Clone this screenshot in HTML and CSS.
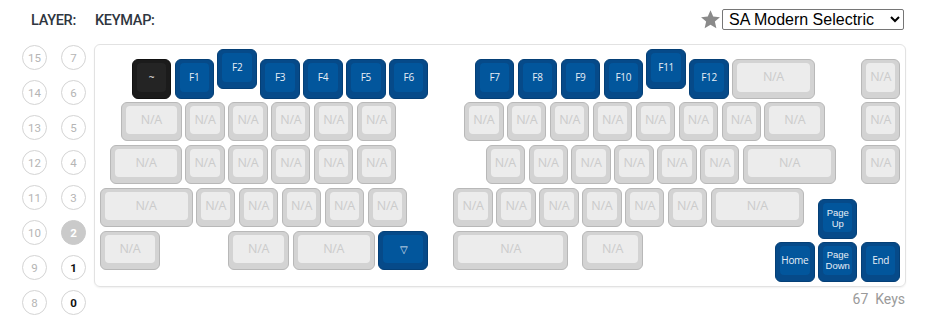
FILE: index.html
```html
<!DOCTYPE html>
<html lang="en">
<head>
    <meta charset="UTF-8">
    <meta name="viewport" content="width=device-width, initial-scale=1.0">
    <title>Keymap</title>
    <link rel="stylesheet" href="styles.css">
</head>
<body>
    <!-- Barra superior -->
    <div class="cabecera">
        <span class="titulo titulo-layer">LAYER:</span>
        <span class="titulo">KEYMAP:</span>
        <div class="perfil">
            <svg class="estrella" viewBox="0 0 24 24" width="21" height="21">
                <path d="M12 1.5l3.1 7.1 7.7.7-5.8 5.1 1.7 7.6L12 18l-6.7 4 1.7-7.6-5.8-5.1 7.7-.7z" fill="#8a8a8a"/>
            </svg>
            <select class="selector">
                <option>SA Modern Selectric</option>
            </select>
        </div>
    </div>

    <div class="principal">
        <!-- Capas -->
        <div class="capas">
            <span class="capa">15</span><span class="capa">7</span>
            <span class="capa">14</span><span class="capa">6</span>
            <span class="capa">13</span><span class="capa">5</span>
            <span class="capa">12</span><span class="capa">4</span>
            <span class="capa">11</span><span class="capa">3</span>
            <span class="capa">10</span><span class="capa activa">2</span>
            <span class="capa">9</span><span class="capa usada">1</span>
            <span class="capa">8</span><span class="capa usada">0</span>
        </div>

        <div class="columna">
            <!-- Teclado -->
            <div class="teclado" id="teclado"></div>
            <div class="pie">67&nbsp; Keys</div>
        </div>
    </div>

    <script>
        // [x, y, ancho, etiqueta, color] en unidades de tecla
        const U = 42.9;
        const teclas = [
            [0.75, 0, 1, '~', 'negra'], [1.75, 0, 1, 'F1', 'azul'], [2.75, -0.23, 1, 'F2', 'azul'],
            [3.75, 0, 1, 'F3', 'azul'], [4.75, 0, 1, 'F4', 'azul'], [5.75, 0, 1, 'F5', 'azul'], [6.75, 0, 1, 'F6', 'azul'],
            [8.75, 0, 1, 'F7', 'azul'], [9.75, 0, 1, 'F8', 'azul'], [10.75, 0, 1, 'F9', 'azul'], [11.75, 0, 1, 'F10', 'azul'],
            [12.75, -0.23, 1, 'F11', 'azul'], [13.75, 0, 1, 'F12', 'azul'], [14.75, 0, 2], [17.75, 0, 1],

            [0.5, 1, 1.5], [2, 1, 1], [3, 1, 1], [4, 1, 1], [5, 1, 1], [6, 1, 1],
            [8.5, 1, 1], [9.5, 1, 1], [10.5, 1, 1], [11.5, 1, 1], [12.5, 1, 1], [13.5, 1, 1], [14.5, 1, 1],
            [15.5, 1, 1.5], [17.75, 1, 1],

            [0.25, 2, 1.75], [2, 2, 1], [3, 2, 1], [4, 2, 1], [5, 2, 1], [6, 2, 1],
            [9, 2, 1], [10, 2, 1], [11, 2, 1], [12, 2, 1], [13, 2, 1], [14, 2, 1], [15, 2, 2.25], [17.75, 2, 1],

            [0, 3, 2.25], [2.25, 3, 1], [3.25, 3, 1], [4.25, 3, 1], [5.25, 3, 1], [6.25, 3, 1],
            [8.25, 3, 1], [9.25, 3, 1], [10.25, 3, 1], [11.25, 3, 1], [12.25, 3, 1], [13.25, 3, 1],
            [14.25, 3, 2.25], [16.75, 3.27, 1, 'Page<br>Up', 'azul doble'],

            [0, 4, 1.5], [3, 4, 1.5], [4.5, 4, 2], [6.5, 4, 1.25, '&#9661;', 'azul'],
            [8.25, 4, 2.75], [11.25, 4, 1.5],
            [15.75, 4.27, 1, 'Home', 'azul'], [16.75, 4.27, 1, 'Page<br>Down', 'azul doble'], [17.75, 4.27, 1, 'End', 'azul']
        ];

        const teclado = document.getElementById('teclado');
        teclas.forEach(function (t) {
            const tecla = document.createElement('div');
            tecla.className = 'tecla ' + (t[4] || 'vacia');
            tecla.style.left = (4.5 + t[0] * U) + 'px';
            tecla.style.top = (14 + t[1] * U) + 'px';
            tecla.style.width = (t[2] * U - 3.5) + 'px';
            tecla.innerHTML = '<div class="cara">' + (t[3] || 'N/A') + '</div>';
            teclado.appendChild(tecla);
        });
    </script>
</body>
</html>
```

FILE: styles.css
```css
/* Estilo general */
body {
    margin: 0;
    width: 931px;
    font-family: "Open Sans", Arial, sans-serif;
    background-color: #fff;
    color: #333;
}

/* Cabecera */
.cabecera {
    height: 44px;
    display: flex;
    align-items: center;
    padding: 0 27px 0 31px;
}

.titulo {
    font-family: Roboto, Arial, sans-serif;
    font-weight: 500;
    font-size: 14.5px;
    color: #2f3640;
    letter-spacing: -0.3px;
    margin-top: -4px;
}

.titulo-layer {
    width: 64px;
}

.perfil {
    margin-left: auto;
    display: flex;
    align-items: center;
    gap: 1px;
    margin-top: -5px;
}

.selector {
    width: 182px;
    height: 21px;
    font-family: "Liberation Sans", Arial, sans-serif;
    font-size: 16px;
    color: #000;
    background-color: #fff;
    border: 1px solid #767676;
    border-radius: 2px;
    padding: 0 2px;
}

/* Zona principal */
.principal {
    display: flex;
    align-items: flex-start;
}

.capas {
    width: 72px;
    padding: 1px 0 0 22px;
    display: grid;
    grid-template-columns: 25px 25px;
    grid-auto-rows: 25px;
    column-gap: 14px;
    row-gap: 10px;
}

.capa {
    box-sizing: border-box;
    width: 25px;
    height: 25px;
    border: 1px solid #d4d4d4;
    border-radius: 50%;
    display: flex;
    align-items: center;
    justify-content: center;
    font-family: Roboto, Arial, sans-serif;
    font-size: 11.5px;
    color: #b5b5b5;
}

.capa.activa {
    background-color: #cacaca;
    border-color: #cacaca;
    color: #fff;
    font-weight: 700;
}

.capa.usada {
    color: #111;
    font-weight: 700;
}

.columna {
    width: 812px;
}

/* Teclado */
.teclado {
    position: relative;
    box-sizing: border-box;
    height: 243px;
    border: 1px solid #e2e2e2;
    border-radius: 6px;
    box-shadow: 0 1px 2px rgba(0, 0, 0, 0.06);
}

.tecla {
    position: absolute;
    box-sizing: border-box;
    height: 39.5px;
    padding: 3px 4px 6px;
    border: 1px solid #b8b8b8;
    border-radius: 6px;
    background-color: #d3d3d3;
}

.cara {
    height: 100%;
    border-radius: 4px;
    background-color: #ececec;
    display: flex;
    align-items: center;
    justify-content: center;
    text-align: center;
    font-size: 12.5px;
    line-height: 12px;
    color: #cbcbcb;
    letter-spacing: -0.3px;
}

.tecla.azul {
    background-color: #064a89;
    border-color: #043f76;
}

.tecla.azul .cara {
    background-color: #02569c;
    color: #e8eef6;
    font-size: 10px;
}

.tecla.doble .cara {
    font-family: "Liberation Sans", Arial, sans-serif;
    font-size: 9.5px;
    line-height: 11px;
    letter-spacing: 0;
}

.tecla.negra {
    background-color: #1b1b1b;
    border-color: #111;
}

.tecla.negra .cara {
    background-color: #242424;
    color: #eee;
    font-size: 10px;
}

/* Pie */
.pie {
    text-align: right;
    padding-right: 1px;
    margin-top: 2px;
    font-family: Roboto, Arial, sans-serif;
    font-size: 14px;
    line-height: 20px;
    color: #9a9a9a;
}
```
